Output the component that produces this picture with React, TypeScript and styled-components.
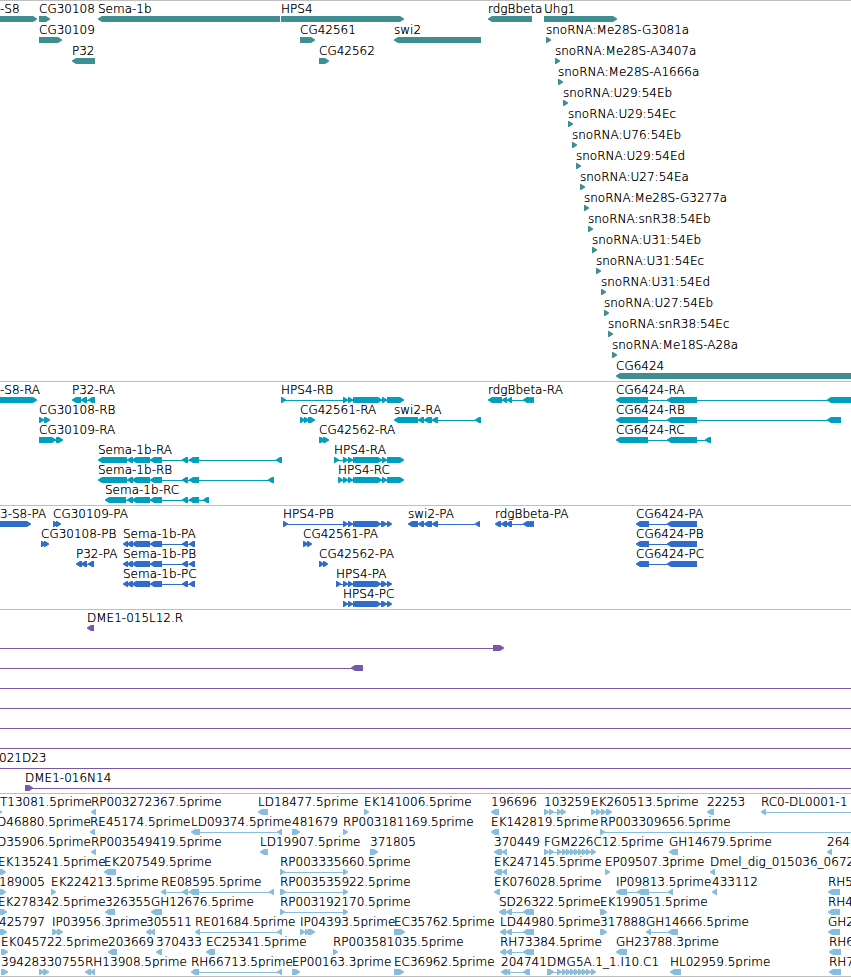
import React from "react";
import styled, { createGlobalStyle } from "styled-components";

const GlobalStyle = createGlobalStyle`
  body {
    margin: 0;
    background: #ffffff;
    color: #000000;
    font-family: "DejaVu Sans", Verdana, sans-serif;
    font-size: 12px;
    font-weight: 200;
    line-height: 14px;
  }
`;

const Browser = styled.main`
  display: flex;
  flex-direction: column;
  overflow: hidden;
  border-bottom: 1px solid #bebebe;
`;

const TrackPanel = styled.section<{ $color: string; $gap: number; $bottom: number }>`
  display: flex;
  flex-direction: column;
  gap: ${(p) => p.$gap}px;
  padding: 1px 0 ${(p) => p.$bottom}px;
  border-top: 1px solid #bebebe;
  color: ${(p) => p.$color};
`;

const LaneRow = styled.div`
  position: relative;
  height: 20px;
`;

/* Features sit at their own coordinate along the sequence. */
const Label = styled.span<{ $x: number }>`
  position: absolute;
  top: 0;
  left: ${(p) => p.$x}px;
  color: #000000;
  text-shadow: 0 0 0 #000000;
  white-space: pre;
`;

const Glyph = styled.svg<{ $x: number }>`
  position: absolute;
  bottom: 0;
  left: ${(p) => p.$x}px;
  display: block;
  fill: currentColor;
`;

type Dir = "L" | "R";
type Segment = [number, number];

interface Feature {
  dir: Dir;
  segments: Segment[];
  label?: string;
  labelX?: number;
  from?: number;
  to?: number;
}

interface Track {
  color: string;
  gap?: number;
  bottom?: number;
  lanes: Feature[][];
}

const START = -20;
const END = 4000;
const HEAD = 5;

const f = (
  label: string,
  dir: Dir,
  segments: Segment[],
  extra: Partial<Feature> = {}
): Feature => ({ label, dir, segments, ...extra });

const outline = (a: number, b: number, dir: Dir) => {
  const head = Math.min(HEAD, b - a);
  return dir === "R"
    ? `M${a} 0H${b - head + 1}L${b} 2.4V3.6L${b - head + 1} 6H${a}Z`
    : `M${b} 0H${a + head - 1}L${a} 2.4V3.6L${a + head - 1} 6H${b}Z`;
};

const hps4Rna: Segment[] = [[343, 348], [348, 353], [353, 358], [355, 382], [382, 387], [387, 404]];
const hps4Protein: Segment[] = [[343, 348], [348, 353], [353, 358], [355, 381], [381, 387], [387, 392]];
const semaTail: Segment[] = [[127, 133], [132, 150], [150, 162], [182, 188], [189, 199]];
const semaProtein: Segment[] = [[123, 128], [127, 133], [132, 150], [150, 162], [182, 188], [189, 195]];
const rdgTail: Segment[] = [[523, 529], [526, 532], [529, 534]];
const cg6424: Segment[] = [[616, 648], [667, 697]];
const cg6424Protein: Segment[] = [[636, 649], [667, 697]];
const uhgChain: Segment[] = [[557, 562], [562, 567], [566, 571], [570, 575], [574, 579], [578, 583], [582, 587], [586, 591], [591, 596]];

const sno = (name: string, x: number) => f(`snoRNA:${name}`, "R", [[x, x + 5]]);

const genes: Track = {
  color: "#3f8e92",
  gap: 1,
  lanes: [
    [
      f("-S8", "R", [[START, 37]], { labelX: 0 }),
      f("CG30108", "R", [[39, 50]]),
      f("Sema-1b", "L", [[98, 280]]),
      f("HPS4", "R", [[281, 404]]),
      f("rdgBbeta", "L", [[488, 532]]),
      f("Uhg1", "R", [[544, 617]]),
    ],
    [
      f("CG30109", "R", [[39, 62]]),
      f("CG42561", "R", [[300, 315]]),
      f("swi2", "L", [[394, 481]]),
      sno("Me28S-G3081a", 546),
    ],
    [f("P32", "L", [[72, 95]]), f("CG42562", "R", [[319, 329]]), sno("Me28S-A3407a", 555)],
    [sno("Me28S-A1666a", 558)],
    [sno("U29:54Eb", 563)],
    [sno("U29:54Ec", 568)],
    [sno("U76:54Eb", 572)],
    [sno("U29:54Ed", 576)],
    [sno("U27:54Ea", 580)],
    [sno("Me28S-G3277a", 584)],
    [sno("snR38:54Eb", 588)],
    [sno("U31:54Eb", 592)],
    [sno("U31:54Ec", 596)],
    [sno("U31:54Ed", 601)],
    [sno("U27:54Eb", 604)],
    [sno("snR38:54Ec", 608)],
    [sno("Me18S-A28a", 612)],
    [f("CG6424", "L", [[616, END]])],
  ],
};

const transcripts: Track = {
  color: "#009ebf",
  lanes: [
    [
      f("-S8-RA", "R", [[START, 37]], { labelX: 0 }),
      f("P32-RA", "L", [[72, 81], [81, 87], [88, 95]]),
      f("HPS4-RB", "R", [[281, 286], ...hps4Rna]),
      f("rdgBbeta-RA", "L", [[488, 502], [502, 507], [507, 512], ...rdgTail]),
      f("CG6424-RA", "L", [...cg6424, [827, END]]),
    ],
    [
      f("CG30108-RB", "R", [[39, 44], [44, 50]]),
      f("CG42561-RA", "R", [[300, 305], [304, 309], [308, 315]]),
      f("swi2-RA", "L", [[394, 418], [418, 424], [424, 432], [432, 438], [475, 481]]),
      f("CG6424-RB", "L", [...cg6424, [827, 841]]),
    ],
    [
      f("CG30109-RA", "R", [[39, 56], [56, 63]]),
      f("CG42562-RA", "R", [[319, 325], [323, 329]]),
      f("CG6424-RC", "L", [...cg6424, [705, 711]]),
    ],
    [
      f("Sema-1b-RA", "L", [[98, 127], ...semaTail, [276, 282]]),
      f("HPS4-RA", "R", [[334, 339], ...hps4Rna]),
    ],
    [
      f("Sema-1b-RB", "L", [[98, 127], ...semaTail, [268, 274]]),
      f("HPS4-RC", "R", [[338, 343], ...hps4Rna]),
    ],
    [f("Sema-1b-RC", "L", [[105, 126], ...semaTail, [203, 209]])],
  ],
};

const proteins: Track = {
  color: "#306ccb",
  lanes: [
    [
      f("3-S8-PA", "R", [[START, 31]], { labelX: 0 }),
      f("CG30109-PA", "R", [[53, 58], [56, 61]]),
      f("HPS4-PB", "R", [[283, 288], ...hps4Protein]),
      f("swi2-PA", "L", [[408, 418], [418, 424], [424, 432], [432, 438], [475, 480]]),
      f("rdgBbeta-PA", "L", [[495, 501], [501, 507], [506, 512], ...rdgTail]),
      f("CG6424-PA", "L", cg6424Protein),
    ],
    [
      f("CG30108-PB", "R", [[41, 46], [44, 49]]),
      f("Sema-1b-PA", "L", semaProtein),
      f("CG42561-PA", "R", [[303, 308], [307, 312]]),
      f("CG6424-PB", "L", cg6424Protein),
    ],
    [
      f("P32-PA", "L", [[76, 82], [81, 87], [88, 94]]),
      f("Sema-1b-PB", "L", semaProtein),
      f("CG42562-PA", "R", [[319, 324], [323, 328]]),
      f("CG6424-PC", "L", cg6424Protein),
    ],
    [
      f("Sema-1b-PC", "L", semaProtein),
      f("HPS4-PA", "R", [[336, 341], ...hps4Protein]),
    ],
    [f("HPS4-PC", "R", hps4Protein)],
  ],
};

const span: Feature = { dir: "R", segments: [], from: START, to: END };

const clones: Track = {
  color: "#7759a8",
  lanes: [
    [f("DME1-015L12.R", "L", [[87, 94]])],
    [{ dir: "R", segments: [[493, 504]], from: START }],
    [{ dir: "L", segments: [[351, 363]], from: START }],
    [span],
    [span],
    [span],
    [span],
    [{ ...span, label: "021D23", labelX: -1 }],
    [f("DME1-016N14", "R", [[25, 33]], { to: END })],
  ],
};

const ests: Track = {
  color: "#89bddd",
  bottom: 1,
  lanes: [
    [
      f("T13081.5prime", "R", [[START, 2]], { labelX: 0 }),
      f("RP003272367.5prime", "L", [[91, 96]]),
      f("LD18477.5prime", "L", [[258, 268]]),
      f("EK141006.5prime", "R", [[364, 369]]),
      f("196696", "L", [[491, 499]]),
      f("103259", "R", [[544, 549], [549, 554], [557, 562], [561, 566]]),
      f("EK260513.5prime", "R", [[591, 596], [596, 601], [601, 606], [606, 612]]),
      f("22253", "L", [[707, 714]]),
      f("RC0-DL0001-1", "L", [[761, 766]], { to: END }),
    ],
    [
      f("D46880.5prime", "R", [[START, 0]], { labelX: -3 }),
      f("RE45174.5prime", "L", [[90, 95]]),
      f("LD09374.5prime", "L", [[191, 200], [277, 282]]),
      f("481679", "R", [[292, 300]]),
      f("RP003181169.5prime", "R", [[343, 348]]),
      f("EK142819.5prime", "L", [[491, 499]]),
      f("RP003309656.5prime", "R", [[600, 605]], { to: END }),
    ],
    [
      f("D35906.5prime", "R", [[START, 0]], { labelX: -3 }),
      f("RP003549419.5prime", "L", [[91, 96]]),
      f("LD19907.5prime", "L", [[260, 268]]),
      f("371805", "R", [[370, 378]]),
      f("370449", "L", [[494, 502], [502, 507]]),
      f("FGM226C12.5prime", "R", [[544, 549], [549, 554], ...uhgChain]),
      f("GH14679.5prime", "L", [[669, 678]]),
      f("264", "L", [[827, 832]]),
    ],
    [
      f("EK135241.5prime", "R", [[START, 6]], { labelX: -2 }),
      f("EK207549.5prime", "L", [[104, 116]]),
      f("RP003335660.5prime", "R", [[280, 285], [343, 348]]),
      f("EK247145.5prime", "L", [[494, 502], [502, 507]]),
      f("EP09507.3prime", "R", [[605, 610]]),
      f("Dmel_dig_015036_0672", "L", [[710, 715]]),
    ],
    [
      f("189005", "R", [[START, 6]], { labelX: -1 }),
      f("EK224213.5prime", "R", [[51, 56]]),
      f("RE08595.5prime", "L", [[161, 166], [182, 188], [189, 199], [269, 274]]),
      f("RP003535922.5prime", "R", [[280, 286], [343, 348]]),
      f("EK076028.5prime", "L", [[494, 500]]),
      f("IP09813.5prime", "L", [[616, 627], [637, 649], [668, 673]]),
      f("433112", "L", [[712, 717]]),
      f("RH5", "L", [[828, 840]]),
    ],
    [
      f("EK278342.5prime", "R", [[START, 7]], { labelX: -2 }),
      f("326355", "L", [[105, 115]]),
      f("GH12676.5prime", "L", [[151, 162]]),
      f("RP003192170.5prime", "R", [[280, 285], [343, 348]]),
      f("SD26322.5prime", "L", [[499, 506], [506, 512], ...rdgTail]),
      f("EK199051.5prime", "R", [[600, 607]]),
      f("RH4", "L", [[828, 840]]),
    ],
    [
      f("425797", "R", [[START, 7]], { labelX: -1 }),
      f("IP03956.3prime", "R", [[52, 58], [57, 63]]),
      f("305511", "L", [[146, 151], [150, 155]]),
      f("RE01684.5prime", "L", [[195, 200], [277, 282]]),
      f("IP04393.5prime", "R", [[300, 305], [305, 310], [308, 315]]),
      f("EC35762.5prime", "R", [[394, 405]]),
      f("LD44980.5prime", "L", [[500, 506], [506, 512], ...rdgTail]),
      f("317888", "R", [[600, 607]]),
      f("GH14666.5prime", "L", [[646, 651], [668, 678]]),
      f("GH2", "L", [[828, 840]]),
    ],
    [
      f("EK045722.5prime", "R", [[1, 8]]),
      f("203669", "L", [[108, 117]]),
      f("370433", "L", [[156, 162]]),
      f("EC25341.5prime", "L", [[206, 215]]),
      f("RP003581035.5prime", "R", [[333, 338]]),
      f("RH73384.5prime", "L", [[500, 506], [506, 512], ...rdgTail]),
      f("GH23788.3prime", "L", [[616, 627]]),
      f("RH6", "L", [[829, 841]]),
    ],
    [
      f("39428", "R", [[1, 8]]),
      f("330755", "R", [[39, 44], [43, 49]]),
      f("RH13908.5prime", "L", [[85, 91], [90, 95]]),
      f("RH66713.5prime", "L", [[191, 199], [277, 282]]),
      f("EP00163.3prime", "R", [[292, 300]]),
      f("EC36962.5prime", "R", [[394, 404]]),
      f("204741", "L", [[501, 507], [505, 510], [523, 530]]),
      f("DMG5A.1_1.I10.C1", "R", [[547, 554], ...uhgChain]),
      f("HL02959.5prime", "L", [[670, 681]]),
      f("RH7", "L", [[829, 841]]),
    ],
  ],
};

const tracks: Track[] = [genes, transcripts, proteins, clones, ests];

function FeatureMark({ feature }: { feature: Feature }) {
  const { dir, segments, label } = feature;
  const from = feature.from ?? segments[0][0];
  const to = feature.to ?? segments[segments.length - 1][1];
  return (
    <>
      <Glyph $x={from} width={to - from} height={6} aria-hidden="true">
        <rect x={1} y={3} width={to - from - 2} height={1} />
        {segments.map(([a, b]) => (
          <path key={a} d={outline(a - from, b - from, dir)} />
        ))}
      </Glyph>
      {label && <Label $x={feature.labelX ?? from}>{label}</Label>}
    </>
  );
}

export default function App() {
  return (
    <>
      <GlobalStyle />
      <Browser>
        {tracks.map((track, t) => (
          <TrackPanel key={t} $color={track.color} $gap={track.gap ?? 0} $bottom={track.bottom ?? 2}>
            {track.lanes.map((lane, l) => (
              <LaneRow key={l}>
                {lane.map((feature, i) => (
                  <FeatureMark key={i} feature={feature} />
                ))}
              </LaneRow>
            ))}
          </TrackPanel>
        ))}
      </Browser>
    </>
  );
}
